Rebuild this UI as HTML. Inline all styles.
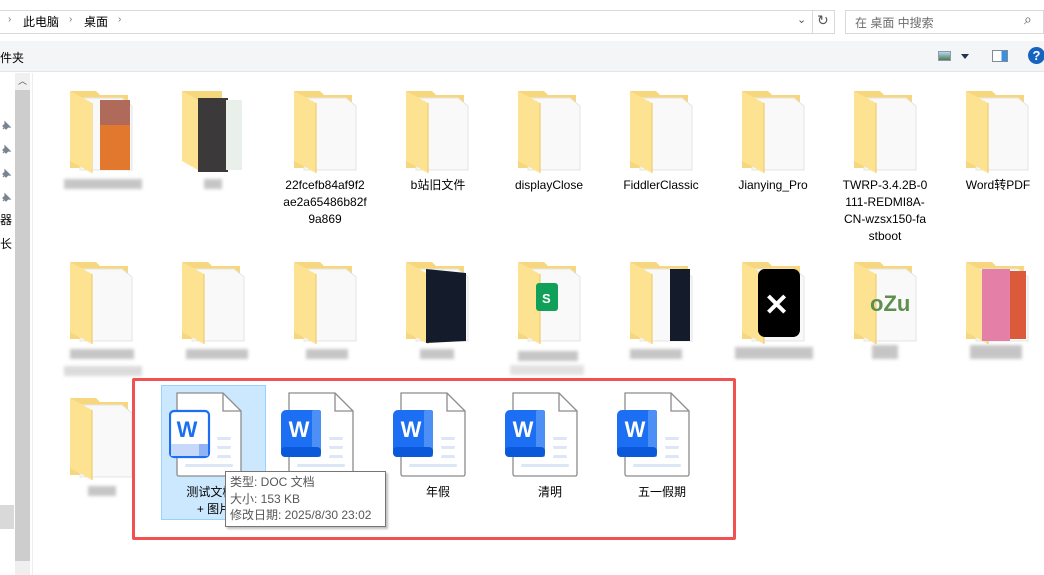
<!DOCTYPE html>
<html><head><meta charset="utf-8"><style>
*{margin:0;padding:0;box-sizing:border-box}
body{width:1044px;height:575px;overflow:hidden;background:#fff;font-family:"Liberation Sans","Noto Sans CJK SC",sans-serif;font-size:12px;color:#000;position:relative}
.a{position:absolute}
.lbl{position:absolute;width:100px;text-align:center;font-size:12px;line-height:17px;color:#000}
.blur{position:absolute;background:#b9b7b9;filter:blur(1.5px);opacity:.8}
</style></head><body>
<svg width="0" height="0" style="position:absolute"><defs>
<g id="fold">
<path d="M0 1 H26 L30 5 H58 V78 H0 Z" fill="#f7d77e"/>
<path d="M10 8 H52 L62 16 V80 H10 Z" fill="#f9f9f9" stroke="#e4e4e4" stroke-width="1"/>
<path d="M0 1 L22 13 V83 L0 71 Z" fill="#fde391"/>
<path d="M22 13 V83" stroke="#ecc767" stroke-width="1"/>
</g>
<g id="doc">
<path d="M8 1 H54 L72 19 V82 Q72 84 70 84 H10 Q8 84 8 82 Z" fill="#fff" stroke="#8c8c8c" stroke-width="1.3"/>
<path d="M54 1 V19 H72" fill="none" stroke="#8c8c8c" stroke-width="1.3"/>
<rect x="48" y="45" width="14" height="3" rx="1.5" fill="#dbe6f7"/>
<rect x="48" y="54" width="14" height="3" rx="1.5" fill="#dbe6f7"/>
<rect x="48" y="63" width="14" height="3" rx="1.5" fill="#dbe6f7"/>
<rect x="16" y="72" width="48" height="3" rx="1.5" fill="#dbe6f7"/>
</g>
<g id="wb">
<rect x="0" y="18" width="40" height="47" rx="5" fill="#1c6ef2"/>
<rect x="31" y="18" width="9" height="47" rx="2" fill="#4c8ff5"/>
<rect x="0" y="55" width="40" height="10" rx="4" fill="#0b58d8"/>
<text x="18" y="45" font-family="Liberation Sans" font-weight="bold" font-size="22" fill="#fff" text-anchor="middle">W</text>
</g>
<g id="pin"><path d="M3 10 L6 7 M5 3 L10 8 L8 8 L6 10 L3 7 L5 5 Z" fill="#7a8593" stroke="#7a8593" stroke-width="1.2"/></g>
</defs></svg>

<!-- address bar -->
<div class="a" style="left:0;top:10px;width:835px;height:24px;border-top:1px solid #d9d9d9;border-bottom:1px solid #d9d9d9;border-right:1px solid #d9d9d9"></div>
<div class="a" style="left:8px;top:14px;color:#777;font-size:10px">›</div>
<div class="a" style="left:23px;top:13px">此电脑</div>
<div class="a" style="left:69px;top:14px;color:#777;font-size:10px">›</div>
<div class="a" style="left:84px;top:13px">桌面</div>
<div class="a" style="left:118px;top:14px;color:#777;font-size:10px">›</div>
<div class="a" style="left:797px;top:13px;color:#555;font-size:11px">⌄</div>
<div class="a" style="left:812px;top:10px;width:1px;height:24px;background:#d9d9d9"></div>
<div class="a" style="left:817px;top:12px;color:#555;font-size:14px">↻</div>
<div class="a" style="left:845px;top:10px;width:199px;height:24px;border:1px solid #d9d9d9"></div>
<div class="a" style="left:855px;top:14px;color:#6d6d6d">在 桌面 中搜索</div>
<div class="a" style="left:1024px;top:11px;color:#555;font-size:14px">⌕</div>

<!-- toolbar -->
<div class="a" style="left:0;top:41px;width:1044px;height:31px;background:#f4f5f7;border-bottom:1px solid #e6e6e6"></div>
<div class="a" style="left:0;top:49px;font-size:12px">件夹</div>
<div class="a" style="left:938px;top:51px;width:13px;height:10px;border:1px solid #8a9bb0;background:linear-gradient(#b9d6ee,#4f7a52)"></div>
<div class="a" style="left:961px;top:54px;width:0;height:0;border-left:4px solid transparent;border-right:4px solid transparent;border-top:5px solid #1e3552"></div>
<div class="a" style="left:992px;top:50px;width:16px;height:12px;border:1px solid #7c8a99;background:linear-gradient(90deg,#fff 60%,#3d8fe0 60%)"></div>
<div class="a" style="left:1028px;top:47px;width:17px;height:17px;border-radius:50%;background:#1664c0;color:#fff;font-weight:bold;font-size:13px;text-align:center;line-height:17px">?</div>

<!-- left nav -->
<svg class="a" style="left:0;top:119px" width="12" height="12"><use href="#pin"/></svg>
<svg class="a" style="left:0;top:143px" width="12" height="12"><use href="#pin"/></svg>
<svg class="a" style="left:0;top:167px" width="12" height="12"><use href="#pin"/></svg>
<svg class="a" style="left:0;top:191px" width="12" height="12"><use href="#pin"/></svg>
<div class="a" style="left:0;top:208px;font-size:12px;line-height:24px">器<br>长</div>
<div class="a" style="left:0;top:505px;width:14px;height:24px;background:#d9d9d9"></div>
<div class="a" style="left:15px;top:73px;width:15px;height:502px;background:#cdcdcd"></div>
<div class="a" style="left:15px;top:73px;width:15px;height:17px;background:#f0f0f0;color:#555;font-size:9px;text-align:center;line-height:17px">︿</div>
<div class="a" style="left:15px;top:561px;width:15px;height:14px;background:#efefef"></div>
<div class="a" style="left:32px;top:73px;width:1px;height:502px;background:#eee"></div>

<!-- row 1 folders -->
<svg class="a" style="left:70px;top:90px" width="64" height="86"><use href="#fold"/><rect x="30" y="10" width="30" height="70" fill="#e2782d"/><rect x="30" y="10" width="30" height="25" fill="#b06a5a"/><path d="M0 1 L22 13 V83 L0 71 Z" fill="#fde391"/></svg>
<svg class="a" style="left:182px;top:90px" width="64" height="86"><rect x="0" y="1" width="40" height="70" fill="#f7d77e"/><rect x="16" y="8" width="30" height="74" fill="#3b3939"/><rect x="44" y="10" width="16" height="70" fill="#e9f0ea"/><path d="M0 1 L16 10 V80 L0 71 Z" fill="#fde391"/></svg>
<svg class="a" style="left:294px;top:90px" width="64" height="86"><use href="#fold"/></svg>
<svg class="a" style="left:406px;top:90px" width="64" height="86"><use href="#fold"/></svg>
<svg class="a" style="left:518px;top:90px" width="64" height="86"><use href="#fold"/></svg>
<svg class="a" style="left:630px;top:90px" width="64" height="86"><use href="#fold"/></svg>
<svg class="a" style="left:742px;top:90px" width="64" height="86"><use href="#fold"/></svg>
<svg class="a" style="left:854px;top:90px" width="64" height="86"><use href="#fold"/></svg>
<svg class="a" style="left:966px;top:90px" width="64" height="86"><use href="#fold"/></svg>

<div class="blur" style="left:64px;top:179px;width:78px;height:10px"></div>
<div class="blur" style="left:204px;top:179px;width:18px;height:10px"></div>
<div class="lbl" style="left:275px;top:177px">22fcefb84af9f2<br>ae2a65486b82f<br>9a869</div>
<div class="lbl" style="left:388px;top:177px">b站旧文件</div>
<div class="lbl" style="left:499px;top:177px">displayClose</div>
<div class="lbl" style="left:611px;top:177px">FiddlerClassic</div>
<div class="lbl" style="left:723px;top:177px">Jianying_Pro</div>
<div class="lbl" style="left:835px;top:177px">TWRP-3.4.2B-0<br>111-REDMI8A-<br>CN-wzsx150-fa<br>stboot</div>
<div class="lbl" style="left:948px;top:177px">Word转PDF</div>

<!-- row 2 folders -->
<svg class="a" style="left:70px;top:261px" width="64" height="86"><use href="#fold"/></svg>
<svg class="a" style="left:182px;top:261px" width="64" height="86"><use href="#fold"/></svg>
<svg class="a" style="left:294px;top:261px" width="64" height="86"><use href="#fold"/></svg>
<svg class="a" style="left:406px;top:261px" width="64" height="86"><use href="#fold"/><path d="M20 8 L60 12 V80 L20 82 Z" fill="#141b2b"/></svg>
<svg class="a" style="left:518px;top:261px" width="64" height="86"><use href="#fold"/><rect x="18" y="22" width="22" height="28" rx="3" fill="#11a05a"/><text x="24" y="42" fill="#fff" font-size="13" font-family="Liberation Sans" font-weight="bold">S</text></svg>
<svg class="a" style="left:630px;top:261px" width="64" height="86"><use href="#fold"/><rect x="40" y="8" width="20" height="72" fill="#141b2b"/></svg>
<svg class="a" style="left:742px;top:261px" width="64" height="86"><use href="#fold"/><rect x="16" y="8" width="42" height="68" rx="7" fill="#000"/><text x="22" y="54" fill="#fff" font-size="30" font-family="Liberation Sans" font-weight="bold">✕</text></svg>
<svg class="a" style="left:854px;top:261px" width="64" height="86"><use href="#fold"/><text x="16" y="50" fill="#5f8f4f" font-size="22" font-family="Liberation Sans" font-weight="bold">oZu</text></svg>
<svg class="a" style="left:966px;top:261px" width="64" height="86"><use href="#fold"/><rect x="16" y="8" width="28" height="72" fill="#e47fa8"/><rect x="44" y="10" width="16" height="68" fill="#db5a3b"/></svg>

<div class="blur" style="left:70px;top:349px;width:64px;height:10px"></div>
<div class="blur" style="left:64px;top:366px;width:78px;height:10px;opacity:.5"></div>
<div class="blur" style="left:186px;top:349px;width:62px;height:10px"></div>
<div class="blur" style="left:306px;top:349px;width:42px;height:10px"></div>
<div class="blur" style="left:420px;top:349px;width:34px;height:10px"></div>
<div class="blur" style="left:518px;top:351px;width:60px;height:10px"></div>
<div class="blur" style="left:510px;top:365px;width:74px;height:10px;opacity:.4"></div>
<div class="blur" style="left:630px;top:349px;width:52px;height:10px"></div>
<div class="blur" style="left:735px;top:347px;width:78px;height:12px"></div>
<div class="blur" style="left:872px;top:345px;width:26px;height:14px"></div>
<div class="blur" style="left:970px;top:345px;width:52px;height:14px"></div>

<!-- row 3 -->
<svg class="a" style="left:70px;top:397px" width="64" height="86"><use href="#fold"/></svg>
<div class="blur" style="left:88px;top:486px;width:28px;height:10px"></div>

<div class="a" style="left:161px;top:385px;width:105px;height:135px;background:#cce8ff;border:1px solid #99d1ff"></div>
<svg class="a" style="left:169px;top:392px" width="76" height="88"><use href="#doc"/>
<rect x="1" y="19" width="39" height="46" rx="4" fill="#fff" stroke="#1c6ef2" stroke-width="2.2"/>
<rect x="2" y="52" width="37" height="12" fill="#c7d9fb"/><rect x="30" y="52" width="9" height="12" fill="#8fb3f5"/>
<text x="18" y="45" font-family="Liberation Sans" font-weight="bold" font-size="22" fill="#1c6ef2" text-anchor="middle">W</text></svg>
<svg class="a" style="left:281px;top:392px" width="76" height="88"><use href="#doc"/><use href="#wb"/></svg>
<svg class="a" style="left:393px;top:392px" width="76" height="88"><use href="#doc"/><use href="#wb"/></svg>
<svg class="a" style="left:505px;top:392px" width="76" height="88"><use href="#doc"/><use href="#wb"/></svg>
<svg class="a" style="left:617px;top:392px" width="76" height="88"><use href="#doc"/><use href="#wb"/></svg>

<div class="a" style="left:164px;top:484px;width:100px;text-align:center;line-height:17px">测试文档 -<br>+ 图片</div>
<div class="lbl" style="left:388px;top:484px">年假</div>
<div class="lbl" style="left:500px;top:484px">清明</div>
<div class="lbl" style="left:612px;top:484px">五一假期</div>

<!-- tooltip -->
<div class="a" style="left:225px;top:471px;width:161px;height:56px;background:#fff;border:1px solid #767676;box-shadow:2px 2px 2px rgba(0,0,0,.25);color:#575757;font-size:12px;line-height:16.5px;padding:2px 0 0 4px">类型: DOC 文档<br>大小: 153 KB<br>修改日期: 2025/8/30 23:02</div>

<!-- red box -->
<div class="a" style="left:132px;top:378px;width:604px;height:162px;border:3px solid #f05252;border-radius:2px"></div>
</body></html>
